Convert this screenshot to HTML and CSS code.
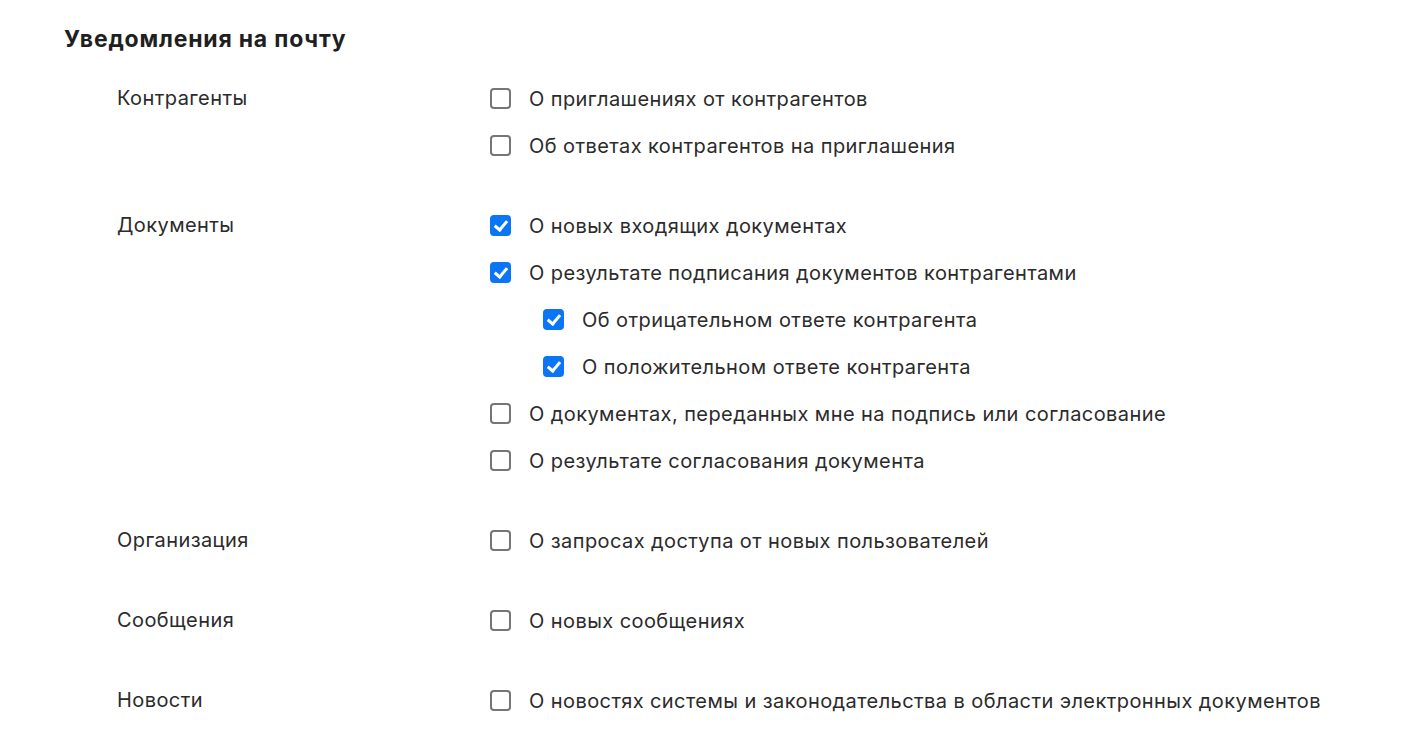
FILE: index.html
```html
<!DOCTYPE html>
<html lang="ru">
<head>
<meta charset="utf-8">
<link rel="stylesheet" href="styles.css">
</head>
<body>
<div class="page">
  <h2 class="title">Уведомления на почту</h2>
  <div class="groups">
    <div class="group">
      <div class="label">Контрагенты</div>
      <div class="options">
        <label class="opt"><span class="cb"></span><span>О приглашениях от контрагентов</span></label>
        <label class="opt"><span class="cb"></span><span>Об ответах контрагентов на приглашения</span></label>
      </div>
    </div>
    <div class="group">
      <div class="label">Документы</div>
      <div class="options">
        <label class="opt"><span class="cb on"></span><span>О новых входящих документах</span></label>
        <label class="opt"><span class="cb on"></span><span>О результате подписания документов контрагентами</span></label>
        <label class="opt sub"><span class="cb on"></span><span>Об отрицательном ответе контрагента</span></label>
        <label class="opt sub"><span class="cb on"></span><span>О положительном ответе контрагента</span></label>
        <label class="opt"><span class="cb"></span><span>О документах, переданных мне на подпись или согласование</span></label>
        <label class="opt"><span class="cb"></span><span>О результате согласования документа</span></label>
      </div>
    </div>
    <div class="group">
      <div class="label">Организация</div>
      <div class="options">
        <label class="opt"><span class="cb"></span><span>О запросах доступа от новых пользователей</span></label>
      </div>
    </div>
    <div class="group">
      <div class="label">Сообщения</div>
      <div class="options">
        <label class="opt"><span class="cb"></span><span>О новых сообщениях</span></label>
      </div>
    </div>
    <div class="group">
      <div class="label">Новости</div>
      <div class="options">
        <label class="opt"><span class="cb"></span><span>О новостях системы и законодательства в области электронных документов</span></label>
      </div>
    </div>
  </div>
</div>
</body>
</html>
```

FILE: styles.css
```css
html, body {
  margin: 0;
  padding: 0;
  background: #ffffff;
}
body {
  font-family: Inter, Roboto, "Liberation Sans", Arial, sans-serif;
  color: #2b2b2b;
}
.page {
  padding: 24px 0 0 64px;
}
.title {
  margin: 0;
  font-size: 23px;
  line-height: 30px;
  font-weight: 700;
  letter-spacing: 0.8px;
  color: #1f1f1f;
}
.groups {
  margin: 21px 0 0 53px;
  display: flex;
  flex-direction: column;
  gap: 33px;
}
.group {
  display: grid;
  grid-template-columns: 373px 1fr;
}
.label {
  font-size: 20px;
  letter-spacing: 0.42px;
  line-height: 47px;
}
.options {
  display: flex;
  flex-direction: column;
}
.opt {
  display: flex;
  align-items: center;
  gap: 18px;
  height: 47px;
  font-size: 20px;
  letter-spacing: 0.42px;
}
.opt.sub {
  padding-left: 53px;
}
.cb {
  box-sizing: border-box;
  width: 21px;
  height: 21px;
  border: 2px solid #767676;
  border-radius: 4px;
  flex: none;
  position: relative;
}
.cb.on {
  background: #0a75f5;
  border-color: #0a75f5;
}
.cb.on::after {
  content: "";
  position: absolute;
  left: 5px;
  top: 1px;
  width: 5px;
  height: 10px;
  border: solid #fff;
  border-width: 0 3px 3px 0;
  transform: rotate(40deg);
}
```
